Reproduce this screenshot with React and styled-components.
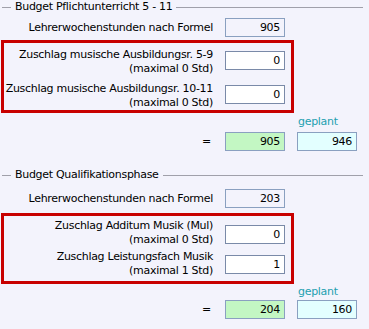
import React from 'react';
import styled, {createGlobalStyle} from 'styled-components';

const Global = createGlobalStyle`
	html, body {
		margin: 0;
		padding: 0;
		background: #f3f3fc;
	}
	body {
		font-family: "DejaVu Sans", Tahoma, sans-serif;
		font-size: 11px;
		letter-spacing: -0.3px;
		color: #000;
	}
`;

const Page = styled.div`
	width: 369px;
	height: 329px;
	overflow: hidden;
	padding-left: 1px;
	box-sizing: border-box;
`;

const Group = styled.div`
	display: flex;
	flex-direction: column;
	margin-top: ${p => p.$top}px;
`;

const Header = styled.div`
	display: flex;
	align-items: center;
	gap: 4px;
	height: 14px;
	line-height: 14px;
	margin-right: 6px;
	&::before, &::after {
		content: '';
		height: 1px;
		background: #a0a0aa;
	}
	&::before {
		width: 9px;
		margin-left: 1px;
	}
	&::after {
		flex: 1;
	}
`;

const Row = styled.div`
	display: grid;
	grid-template-columns: ${p => p.$label}px 60px 60px;
	column-gap: 12px;
	align-items: center;
	margin-top: ${p => p.$top || 0}px;
`;

const Label = styled.div`
	text-align: right;
	line-height: 14px;
	white-space: nowrap;
`;

const Box = styled.div`
	height: 19px;
	box-sizing: border-box;
	border: 1px solid ${p => p.$edit ? '#7a8aa8' : '#8aa0c0'};
	background: ${p => p.$bg || 'transparent'};
	text-align: right;
	padding-right: 4px;
	line-height: 17px;
	margin-bottom: ${p => p.$lift || 0}px;
`;

const Marked = styled.div`
	border: 3px solid #c80000;
	width: 293px;
	box-sizing: border-box;
	display: flex;
	flex-direction: column;
	gap: ${p => p.$gap}px;
	padding: ${p => p.$pad};
	margin-top: ${p => p.$top}px;
`;

const Planned = styled.div`
	color: #22a0b0;
	line-height: 14px;
	height: 14px;
	grid-column: 3;
	padding-left: 1px;
`;

const Eq = styled.div`
	text-align: right;
	padding-right: 2px;
`;

function Extra({title, max, value, lift}) {
	return (
		<Row $label={209}>
			<Label>{title}<br/>(maximal {max} Std)</Label>
			<Box $edit $bg="#ffffff" $lift={lift}>{value}</Box>
		</Row>
	);
}

function Sum({total, planned, top, gap}) {
	return (
		<>
			<Row $label={212} $top={top}>
				<div/>
				<div/>
				<Planned>geplant</Planned>
			</Row>
			<Row $label={212} $top={gap}>
				<Eq>=</Eq>
				<Box $bg="#c3f7c3">{total}</Box>
				<Box $bg="#e3ffff">{planned}</Box>
			</Row>
		</>
	);
}

export default function App() {
	return (
		<Page>
			<Global/>
			<Group $top={0}>
				<Header>Budget Pflichtunterricht 5 - 11</Header>
				<Row $label={212} $top={4}>
					<Label>Lehrerwochenstunden nach Formel</Label>
					<Box>905</Box>
				</Row>
				<Marked $top={3} $gap={6} $pad="5px 0 0 0">
					<Extra title="Zuschlag musische Ausbildungsr. 5-9" max={0} value={0} lift={3}/>
					<Extra title="Zuschlag musische Ausbildungsr. 10-11" max={0} value={0} lift={3}/>
				</Marked>
				<Sum total={905} planned={946} top={2} gap={3}/>
			</Group>
			<Group $top={17}>
				<Header>Budget Qualifikationsphase</Header>
				<Row $label={212} $top={7}>
					<Label>Lehrerwochenstunden nach Formel</Label>
					<Box>203</Box>
				</Row>
				<Marked $top={5} $gap={3} $pad="3px 0 3px 0">
					<Extra title="Zuschlag Additum Musik (Mul)" max={0} value={0} lift={-3}/>
					<Extra title="Zuschlag Leistungsfach Musik" max={1} value={1} lift={0}/>
				</Marked>
				<Sum total={204} planned={160} top={1} gap={1}/>
			</Group>
		</Page>
	);
}
